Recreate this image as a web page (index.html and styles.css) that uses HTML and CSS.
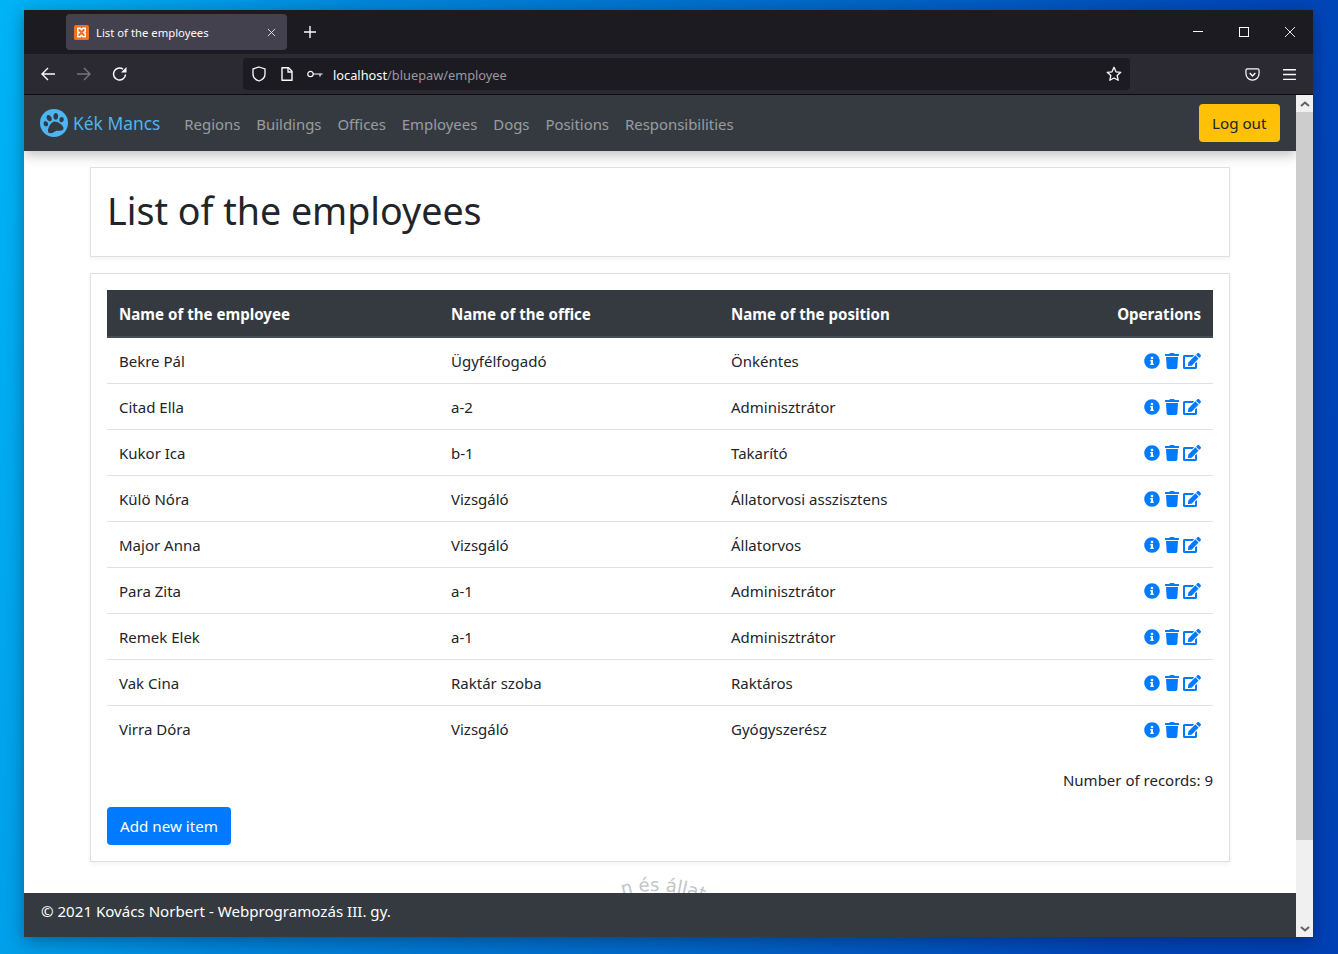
FILE: index.html
```html
<!DOCTYPE html>
<html lang="en">
<head>
    <meta charset="UTF-8">
    <meta name="viewport" content="width=device-width, initial-scale=1.0">
    <title>List of the employees</title>
    <link rel="stylesheet" href="styles.css">
</head>
<body>
    <svg class="defs" aria-hidden="true">
        <symbol id="ico-info" viewBox="0 0 512 512"><path d="M256 8C119.043 8 8 119.083 8 256c0 136.997 111.043 248 248 248s248-111.003 248-248C504 119.083 392.957 8 256 8zm0 110c23.196 0 42 18.804 42 42s-18.804 42-42 42-42-18.804-42-42 18.804-42 42-42zm56 254c0 6.627-5.373 12-12 12h-88c-6.627 0-12-5.373-12-12v-24c0-6.627 5.373-12 12-12h12v-64h-12c-6.627 0-12-5.373-12-12v-24c0-6.627 5.373-12 12-12h64c6.627 0 12 5.373 12 12v100h12c6.627 0 12 5.373 12 12v24z"/></symbol>
        <symbol id="ico-trash" viewBox="0 0 448 512"><path d="M432 32H312l-9.4-18.7A24 24 0 0 0 281.1 0H166.8a23.72 23.72 0 0 0-21.4 13.3L136 32H16A16 16 0 0 0 0 48v32a16 16 0 0 0 16 16h416a16 16 0 0 0 16-16V48a16 16 0 0 0-16-16zM53.2 467a48 48 0 0 0 47.9 45h245.8a48 48 0 0 0 47.9-45L416 128H32z"/></symbol>
        <symbol id="ico-edit" viewBox="0 0 576 512"><path d="M402.6 83.2l90.2 90.2c3.8 3.8 3.8 10 0 13.8L274.4 405.6l-92.8 10.3c-12.4 1.4-22.9-9.1-21.5-21.5l10.3-92.8L388.8 83.2c3.8-3.8 10-3.8 13.8 0zm162-22.9l-48.8-48.8c-15.2-15.2-39.9-15.2-55.2 0l-35.4 35.4c-3.8 3.8-3.8 10 0 13.8l90.2 90.2c3.8 3.8 10 3.8 13.8 0l35.4-35.4c15.2-15.3 15.2-40 0-55.2zM384 346.2V448H64V128h229.8c3.2 0 6.2-1.3 8.5-3.5l40-40c7.6-7.6 2.2-20.5-8.5-20.5H48C21.5 64 0 85.5 0 112v352c0 26.5 21.5 48 48 48h352c26.5 0 48-21.5 48-48V306.2c0-10.7-12.9-16-20.5-8.5l-40 40c-2.2 2.3-3.5 5.3-3.5 8.5z"/></symbol>
    </svg>

    <div class="window">
        <div class="tabbar">
            <div class="tab">
                <svg class="favicon" viewBox="0 0 16 16"><rect width="16" height="16" rx="2" fill="#f0701f"/><path d="M4 3.500h2.500L8 5l1.500-1.500H12V7l-1.500 1L12 9v3.500H9.500L8 11l-1.500 1.500H4V9l1.500-1L4 7z" fill="none" stroke="#fff" stroke-width="1.600"/></svg>
                <span class="tab-title">List of the employees</span>
                <svg class="tab-close" viewBox="0 0 10 10"><path d="M1 1l8 8M9 1l-8 8" stroke="#e6e6e6" stroke-width="1"/></svg>
            </div>
            <svg class="new-tab" viewBox="0 0 12 12"><path d="M6 0v12M0 6h12" stroke="#fbfbfe" stroke-width="1.400"/></svg>
            <div class="win-btns">
                <svg viewBox="0 0 10 10"><path d="M0 4.500h10" stroke="#fff" stroke-width="1"/></svg>
                <svg viewBox="0 0 10 10"><rect x=".5" y=".5" width="9" height="9" fill="none" stroke="#fff"/></svg>
                <svg viewBox="0 0 10 10"><path d="M0 0l10 10M10 0L0 10" stroke="#fff" stroke-width=".9"/></svg>
            </div>
        </div>
        <div class="toolbar">
            <div class="nav-btns">
                <svg viewBox="0 0 16 16"><path d="M15 8H2M8 2L2 8l6 6" fill="none" stroke="#fbfbfe" stroke-width="1.400"/></svg>
                <svg viewBox="0 0 16 16"><path d="M1 8h13M8 2l6 6-6 6" fill="none" stroke="#77767d" stroke-width="1.400"/></svg>
                <svg viewBox="0 0 16 16"><path d="M13.500 8.500A6 6 0 1 1 11 3.200" fill="none" stroke="#fbfbfe" stroke-width="1.500"/><path d="M14.500 1v5.500H9z" fill="#fbfbfe"/></svg>
            </div>
            <div class="urlbar">
                <svg class="url-ico" viewBox="0 0 16 16"><path d="M8 1l6 2v5c0 3.500-3 6-6 7-3-1-6-3.500-6-7V3z" fill="none" stroke="#fbfbfe" stroke-width="1.300"/></svg>
                <svg class="url-ico" viewBox="0 0 16 16"><path d="M3 1.700h6.500l3.500 3.500v9.100H3z" fill="none" stroke="#fbfbfe" stroke-width="1.400" stroke-linejoin="round"/><path d="M9 2v4h4" fill="none" stroke="#fbfbfe" stroke-width="1.300"/></svg>
                <svg class="url-key" viewBox="0 0 16 10"><circle cx="3.500" cy="5" r="2.700" fill="none" stroke="#fbfbfe" stroke-width="1.200"/><path d="M6 5h9.500M13 5v2.500" fill="none" stroke="#fbfbfe" stroke-width="1.200"/></svg>
                <span class="url-text"><span class="url-host">localhost</span>/bluepaw/employee</span>
                <svg class="url-star" viewBox="0 0 16 16"><path d="M8 1.300l2 4.500 4.800.5-3.600 3.200 1 4.800L8 12l-4.200 2.300 1-4.800-3.600-3.200 4.800-.5z" fill="none" stroke="#fbfbfe" stroke-width="1.300" stroke-linejoin="round"/></svg>
            </div>
            <div class="tool-btns">
                <svg viewBox="0 0 16 16"><path d="M2.500 2h11a1.500 1.500 0 0 1 1.500 1.500V7a7 7 0 0 1-14 0V3.500A1.500 1.500 0 0 1 2.500 2z" fill="none" stroke="#fbfbfe" stroke-width="1.300"/><path d="M5 6.500l3 3 3-3" fill="none" stroke="#fbfbfe" stroke-width="1.600"/></svg>
                <svg viewBox="0 0 14 12"><path d="M1 1.500h12M1 6h12M1 10.500h12" stroke="#fbfbfe" stroke-width="1.300"/></svg>
            </div>
        </div>

        <div class="viewport">
            <div class="page">
                <svg class="watermark" viewBox="0 0 300 300" aria-hidden="true">
                    <defs><path id="wm-circle" d="M20 150a130 130 0 0 1 260 0a130 130 0 0 1-260 0"/></defs>
                    <text class="wm-text"><textPath href="#wm-circle" startOffset="171">n és állatok</textPath></text>
                </svg>

                <nav class="navbar">
                    <a class="brand" href="#">
                        <svg class="brand-logo" viewBox="0 0 28 28"><circle cx="14" cy="14" r="14" fill="#4db5f1"/><svg x="3.500" y="3.500" width="21" height="21" viewBox="0 0 512 512"><g transform="rotate(-15 256 256)"><path fill="#343a40" d="M256 224c-79.41 0-192 122.76-192 200.25 0 34.9 26.81 55.75 71.74 55.75 48.84 0 81.09-25.08 120.26-25.08 39.51 0 71.85 25.08 120.26 25.08 44.93 0 71.74-20.85 71.74-55.75C448 346.76 335.41 224 256 224zm-147.28-12.61c-10.4-34.65-42.44-57.09-71.56-50.13-29.12 6.96-44.29 40.69-33.89 75.34 10.4 34.65 42.44 57.09 71.56 50.13 29.12-6.96 44.29-40.69 33.89-75.34zm84.72-20.78c30.94-8.14 46.42-49.94 34.58-93.36s-46.52-72.01-77.46-63.87-46.42 49.94-34.58 93.36c11.84 43.42 46.52 72.01 77.46 63.87zm281.39-29.34c-29.12-6.96-61.15 15.48-71.56 50.13-10.4 34.65 4.77 68.38 33.89 75.34 29.12 6.96 61.15-15.48 71.56-50.13 10.4-34.65-4.77-68.38-33.89-75.34zm-156.27 29.34c30.94 8.14 65.62-20.45 77.46-63.87 11.84-43.42-3.64-85.21-34.58-93.36s-65.62 20.45-77.46 63.87c-11.84 43.42 3.64 85.22 34.58 93.36z"/></g></svg></svg>
                        <span>Kék Mancs</span>
                    </a>
                    <ul class="nav-links">
                        <li><a href="#">Regions</a></li>
                        <li><a href="#">Buildings</a></li>
                        <li><a href="#">Offices</a></li>
                        <li><a href="#">Employees</a></li>
                        <li><a href="#">Dogs</a></li>
                        <li><a href="#">Positions</a></li>
                        <li><a href="#">Responsibilities</a></li>
                    </ul>
                    <button class="btn btn-logout">Log out</button>
                </nav>

                <main class="content">
                    <div class="card card-title">
                        <h1>List of the employees</h1>
                    </div>
                    <div class="card">
                        <table class="table">
                            <thead>
                                <tr>
                                    <th class="col-name">Name of the employee</th>
                                    <th class="col-office">Name of the office</th>
                                    <th class="col-pos">Name of the position</th>
                                    <th class="col-ops">Operations</th>
                                </tr>
                            </thead>
                            <tbody id="rows">
                                <tr><td>Bekre Pál</td><td>Ügyfélfogadó</td><td>Önkéntes</td><td class="col-ops"><span class="ops"><svg class="i-info"><use href="#ico-info"/></svg><svg class="i-trash"><use href="#ico-trash"/></svg><svg class="i-edit"><use href="#ico-edit"/></svg></span></td></tr>
                                <tr><td>Citad Ella</td><td>a-2</td><td>Adminisztrátor</td><td class="col-ops"><span class="ops"><svg class="i-info"><use href="#ico-info"/></svg><svg class="i-trash"><use href="#ico-trash"/></svg><svg class="i-edit"><use href="#ico-edit"/></svg></span></td></tr>
                                <tr><td>Kukor Ica</td><td>b-1</td><td>Takarító</td><td class="col-ops"><span class="ops"><svg class="i-info"><use href="#ico-info"/></svg><svg class="i-trash"><use href="#ico-trash"/></svg><svg class="i-edit"><use href="#ico-edit"/></svg></span></td></tr>
                                <tr><td>Külö Nóra</td><td>Vizsgáló</td><td>Állatorvosi asszisztens</td><td class="col-ops"><span class="ops"><svg class="i-info"><use href="#ico-info"/></svg><svg class="i-trash"><use href="#ico-trash"/></svg><svg class="i-edit"><use href="#ico-edit"/></svg></span></td></tr>
                                <tr><td>Major Anna</td><td>Vizsgáló</td><td>Állatorvos</td><td class="col-ops"><span class="ops"><svg class="i-info"><use href="#ico-info"/></svg><svg class="i-trash"><use href="#ico-trash"/></svg><svg class="i-edit"><use href="#ico-edit"/></svg></span></td></tr>
                                <tr><td>Para Zita</td><td>a-1</td><td>Adminisztrátor</td><td class="col-ops"><span class="ops"><svg class="i-info"><use href="#ico-info"/></svg><svg class="i-trash"><use href="#ico-trash"/></svg><svg class="i-edit"><use href="#ico-edit"/></svg></span></td></tr>
                                <tr><td>Remek Elek</td><td>a-1</td><td>Adminisztrátor</td><td class="col-ops"><span class="ops"><svg class="i-info"><use href="#ico-info"/></svg><svg class="i-trash"><use href="#ico-trash"/></svg><svg class="i-edit"><use href="#ico-edit"/></svg></span></td></tr>
                                <tr><td>Vak Cina</td><td>Raktár szoba</td><td>Raktáros</td><td class="col-ops"><span class="ops"><svg class="i-info"><use href="#ico-info"/></svg><svg class="i-trash"><use href="#ico-trash"/></svg><svg class="i-edit"><use href="#ico-edit"/></svg></span></td></tr>
                                <tr><td>Virra Dóra</td><td>Vizsgáló</td><td>Gyógyszerész</td><td class="col-ops"><span class="ops"><svg class="i-info"><use href="#ico-info"/></svg><svg class="i-trash"><use href="#ico-trash"/></svg><svg class="i-edit"><use href="#ico-edit"/></svg></span></td></tr>
                            </tbody>
                        </table>
                        <p class="records">Number of records: 9</p>
                        <button class="btn btn-add">Add new item</button>
                    </div>
                </main>

                <footer class="footer">© 2021 Kovács Norbert - Webprogramozás III. gy.</footer>
            </div>
            <div class="scrollbar">
                <div class="sb-arrow"><svg viewBox="0 0 10 6"><path d="M1 5l4-3.500L9 5" fill="none" stroke="#606060" stroke-width="2"/></svg></div>
                <div class="sb-track"><div class="sb-thumb"></div></div>
                <div class="sb-arrow"><svg viewBox="0 0 10 6"><path d="M1 1l4 3.500L9 1" fill="none" stroke="#606060" stroke-width="2"/></svg></div>
            </div>
        </div>
    </div>
</body>
</html>
```
FILE: styles.css
```css
* {
    box-sizing: border-box;
}
html, body {
    height: 100%;
}
body {
    margin: 0;
    padding: 10px 25px 17px 24px;
    overflow: hidden;
    font-family: "Noto Sans", sans-serif;
    color: #212529;
    background: linear-gradient(100deg, #00b4f6 0%, #0086dc 25%, #0068c8 55%, #0046b8 85%, #0040b4 100%);
}
.defs {
    display: none;
}
.window {
    height: 100%;
    display: flex;
    flex-direction: column;
    box-shadow: 0 4px 16px rgba(0, 0, 0, 0.35);
}

/* browser chrome */
.tabbar {
    height: 44px;
    flex: none;
    display: flex;
    align-items: center;
    padding-left: 42px;
    background-color: #1c1b22;
}
.tab {
    width: 221px;
    height: 36px;
    display: flex;
    align-items: center;
    padding: 0 11px 0 8px;
    background-color: #42414d;
    border-radius: 4px;
    color: #fbfbfe;
}
.favicon {
    width: 15px;
    height: 15px;
    margin-right: 7px;
}
.tab-title {
    flex: 1;
    font-size: 11.3px;
}
.tab-close {
    width: 9px;
    height: 9px;
}
.new-tab {
    width: 12px;
    height: 12px;
    margin-left: 17px;
}
.win-btns {
    margin-left: auto;
    display: flex;
    gap: 36px;
    padding-right: 18px;
}
.win-btns svg {
    width: 10px;
    height: 10px;
}
.toolbar {
    height: 41px;
    flex: none;
    display: flex;
    align-items: flex-start;
    padding-top: 4px;
    background-color: #2b2a33;
    border-bottom: 1px solid #0c0c0d;
}
.nav-btns {
    width: 219px;
    height: 32px;
    display: flex;
    align-items: center;
    gap: 20px;
    padding-left: 16px;
}
.nav-btns svg {
    width: 16px;
    height: 16px;
}
.urlbar {
    width: 887px;
    height: 32px;
    display: flex;
    align-items: center;
    padding: 0 8px;
    background-color: #1c1b22;
    border-radius: 4px;
}
.url-ico {
    width: 16px;
    height: 16px;
    margin-right: 12px;
}
.url-key {
    width: 16px;
    height: 10px;
    margin-right: 10px;
}
.url-text {
    flex: 1;
    padding-top: 2px;
    font-size: 12.8px;
    color: #9a99a0;
}
.url-host {
    color: #fbfbfe;
}
.url-star {
    width: 16px;
    height: 16px;
}
.tool-btns {
    height: 32px;
    display: flex;
    align-items: center;
    gap: 22px;
    padding-left: 115px;
}
.tool-btns svg {
    width: 15px;
    height: 15px;
}

/* page */
.viewport {
    flex: 1;
    min-height: 0;
    display: flex;
}
.page {
    position: relative;
    flex: 1;
    min-width: 0;
    display: flex;
    flex-direction: column;
    overflow: hidden;
    background-color: #fff;
}
.watermark {
    position: absolute;
    left: 481px;
    top: 776px;
    width: 300px;
    height: 300px;
}
.wm-text {
    font-family: "DejaVu Sans", sans-serif;
    font-size: 18px;
    fill: #c4c4c4;
}
.navbar {
    position: relative;
    height: 56px;
    flex: none;
    display: flex;
    align-items: center;
    padding: 0 16px;
    background-color: #343a40;
    box-shadow: 0 4px 12px rgba(0, 0, 0, 0.25);
}
.brand {
    display: flex;
    align-items: center;
    gap: 5px;
    margin-right: 16px;
    font-size: 17.4px;
    color: #4db5f1;
    text-decoration: none;
}
.brand-logo {
    width: 28px;
    height: 28px;
}
.nav-links {
    display: flex;
    flex: 1;
    margin: 0;
    padding: 1px 0 0;
    list-style: none;
}
.nav-links a {
    display: block;
    padding: 0 8px;
    font-size: 14.9px;
    color: rgba(255, 255, 255, 0.5);
    text-decoration: none;
}
.btn {
    height: 38px;
    padding: 0 13px;
    border: none;
    border-radius: 4px;
    font-family: inherit;
    font-size: 15.2px;
    cursor: pointer;
}
.btn-logout {
    padding: 0 13.5px;
    background-color: #ffc107;
    color: #212529;
}
.btn-add {
    display: block;
    background-color: #007bff;
    color: #fff;
}
.content {
    position: relative;
    flex: 1;
    display: flex;
    flex-direction: column;
    gap: 16px;
    padding: 16px 66px 0;
}
.card {
    padding: 16px;
    background-color: #fff;
    border: 1px solid #dfdfdf;
    box-shadow: 0 2px 4px rgba(0, 0, 0, 0.05);
}
h1 {
    margin: 0 0 8px;
    padding-top: 3px;
    height: 48px;
    font-size: 37.6px;
    font-weight: 400;
    line-height: 48px;
}
.table {
    width: 100%;
    border-collapse: separate;
    border-spacing: 0;
    table-layout: fixed;
    font-size: 15px;
}
.table th {
    height: 48px;
    padding: 2px 12px 0;
    text-align: left;
    font-size: 15.1px;
    font-weight: 700;
    color: #fff;
    background-color: #343a40;
    border-bottom: 2px solid #454d55;
}
.table td {
    height: 46px;
    padding: 0 12px;
    border-bottom: 1px solid #dee2e6;
}
.table tr:last-child td {
    border-bottom: none;
}
.col-name {
    width: 332px;
}
.col-office {
    width: 280px;
}
.col-pos {
    width: 280px;
}
.table .col-ops {
    text-align: right;
}
.ops {
    position: relative;
    top: -1px;
    display: inline-flex;
    align-items: center;
    gap: 4px;
    vertical-align: middle;
    fill: #007bff;
}
.i-info {
    width: 16px;
    height: 16px;
}
.i-trash {
    width: 14px;
    height: 16px;
    margin-left: 1px;
}
.i-edit {
    width: 18px;
    height: 16px;
}
.records {
    margin: 16px 0 15px;
    font-size: 15px;
    line-height: 24px;
    text-align: right;
}
.footer {
    height: 44px;
    flex: none;
    position: relative;
    display: flex;
    align-items: center;
    padding: 0 0 8px 17px;
    font-size: 15.1px;
    color: #fff;
    background-color: #343a40;
}

/* scrollbar */
.scrollbar {
    width: 17px;
    flex: none;
    display: flex;
    flex-direction: column;
    background-color: #f0f0f0;
}
.sb-arrow {
    height: 17px;
    flex: none;
    display: flex;
    align-items: center;
    justify-content: center;
}
.sb-arrow svg {
    width: 10px;
    height: 6px;
}
.sb-track {
    flex: 1;
}
.sb-thumb {
    height: 728px;
    background-color: #cdcdcd;
}
```
